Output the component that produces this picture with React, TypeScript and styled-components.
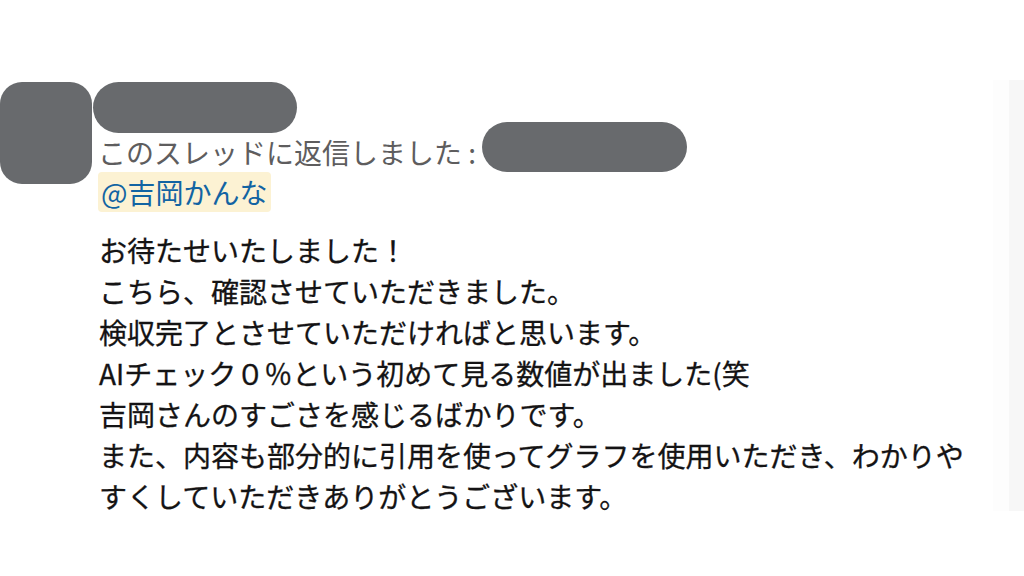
import styled, { createGlobalStyle } from "styled-components";

const GlobalStyle = createGlobalStyle`
    html, body {
        margin: 0;
        padding: 0;
        background: #ffffff;
    }
    body {
        width: 1024px;
        height: 576px;
        overflow: hidden;
        font-family: "Noto Sans CJK JP", "Noto Sans", sans-serif;
    }
`;

const Page = styled.div`
    padding-top: 80px;
`;

const Pane = styled.div`
    display: flex;
    height: 431px;
`;

const Message = styled.div`
    flex: 1;
    display: flex;
    align-items: flex-start;
    padding-top: 2px;
`;

const Scrollbar = styled.div`
    width: 31px;
    display: flex;
`;

const Track = styled.div<{ $tone: string }>`
    flex: 1;
    background: ${(p) => p.$tone};
`;

const Avatar = styled.div`
    width: 92px;
    height: 102px;
    flex-shrink: 0;
    border-radius: 22px;
    background: #686a6d;
`;

const Body = styled.div`
    display: flex;
    flex-direction: column;
    align-items: flex-start;
    padding-left: 1px;
`;

const Redacted = styled.div<{ $w: number }>`
    width: ${(p) => p.$w}px;
    height: 51px;
    border-radius: 26px;
    background: #686a6d;
    flex-shrink: 0;
`;

const ReplyLine = styled.div`
    display: flex;
    align-items: flex-start;
    height: 39px;
    padding-left: 5px;
    font-size: 28px;
    line-height: 39px;
    color: #5e5d5e;
    white-space: nowrap;

    ${Redacted} {
        margin-top: -11px;
        margin-left: 6px;
        height: 50px;
    }
`;

const Mention = styled.span`
    margin-left: 5px;
    padding: 0 3px;
    height: 40px;
    font-size: 28px;
    line-height: 40px;
    color: #1264a3;
    background: #fcf2d3;
    border-radius: 4px;
`;

const Text = styled.div`
    margin-top: 18px;
    padding-left: 6px;
    font-size: 28px;
    line-height: 41px;
    color: #141314;
    white-space: pre-line;
    -webkit-text-stroke: 0.3px #141314;
`;

const lines = [
    "お待たせいたしました！",
    "こちら、確認させていただきました。",
    "検収完了とさせていただければと思います。",
    "AIチェック０％という初めて見る数値が出ました(笑",
    "吉岡さんのすごさを感じるばかりです。",
    "また、内容も部分的に引用を使ってグラフを使用いただき、わかりや",
    "すくしていただきありがとうございます。",
];

export default function App() {
    return (
        <>
            <GlobalStyle />
            <Page>
                <Pane>
                    <Message>
                        <Avatar />
                        <Body>
                            <Redacted $w={204} />
                            <ReplyLine>
                                このスレッドに返信しました :
                                <Redacted $w={205} />
                            </ReplyLine>
                            <Mention>@吉岡かんな</Mention>
                            <Text>{lines.join("\n")}</Text>
                        </Body>
                    </Message>
                    <Scrollbar>
                        <Track $tone="#fdfdfd" />
                        <Track $tone="#f7f7f7" />
                    </Scrollbar>
                </Pane>
            </Page>
        </>
    );
}
